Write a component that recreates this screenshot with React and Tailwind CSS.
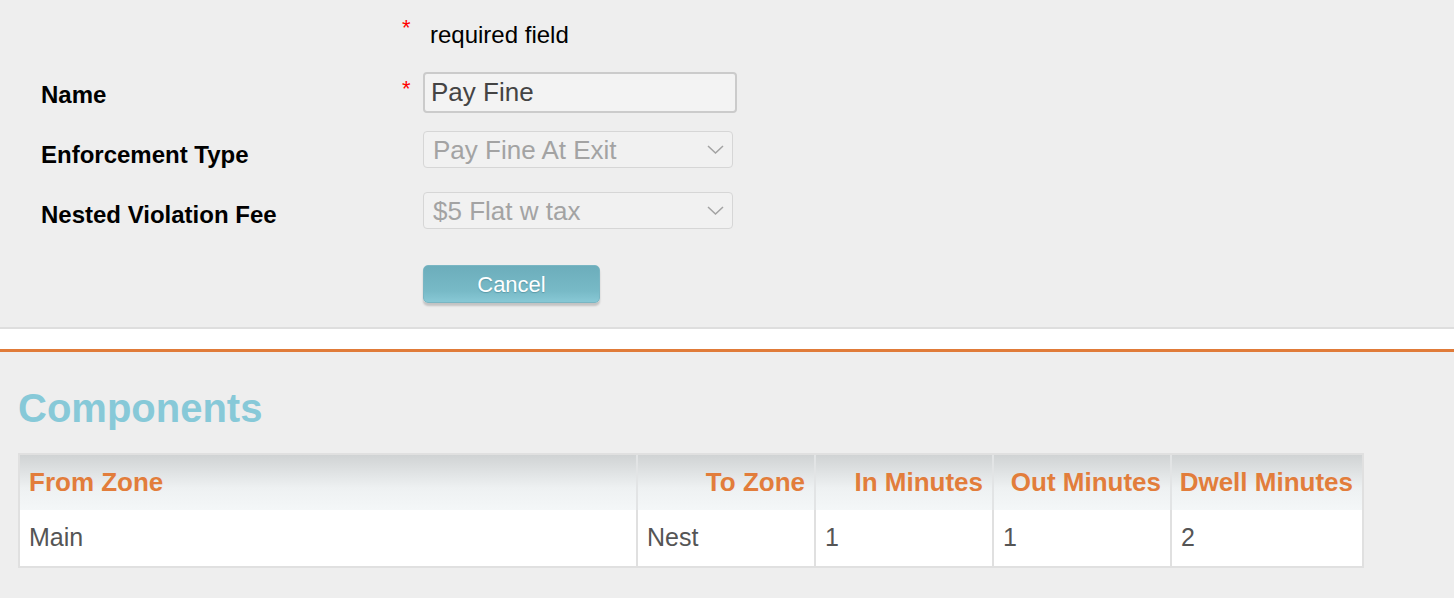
import React from "react";

const Chevron = () => (
  <svg width="17" height="9" viewBox="0 0 17 9" fill="none">
    <path d="M1 1l7.5 7 7.5-7" stroke="#a3a3a3" strokeWidth="1.5" />
  </svg>
);

const Asterisk = ({ className = "" }) => (
  <div className={"w-[21px] shrink-0 self-start text-[22px] leading-none text-[#ff0000] " + className}>
    *
  </div>
);

const FakeSelect = ({ value }) => (
  <div className="flex items-center justify-between w-[310px] h-[37px] self-start mt-[6px] border border-[#d6d6d6] rounded-[4px] bg-[#f1f1f1] pl-[9px] pr-[8px]">
    <span className="text-[26px] leading-none text-[#a3a3a3]">{value}</span>
    <Chevron />
  </div>
);

const rows = [
  { from: "Main", to: "Nest", inMin: "1", outMin: "1", dwell: "2" },
];

const App = () => {
  return (
    <div className="min-h-[598px] bg-[#eeeeee] font-['Liberation_Sans',Arial,sans-serif]">
      {/* form */}
      <div className="pt-[5px] pb-[24px]">
        <div className="flex h-[60px]">
          <div className="w-[402px] shrink-0" />
          <Asterisk className="mt-[12px]" />
          <div className="self-center pl-[7px] text-[24px] text-black">required field</div>
        </div>

        <div className="flex h-[60px]">
          <div className="w-[402px] shrink-0 pl-[41px] self-center text-[24px] font-bold text-black">Name</div>
          <Asterisk className="mt-[13px]" />
          <div className="self-start mt-[7px] w-[314px] h-[41px] flex items-center border-2 border-[#cbcbcb] rounded-[4px] bg-[#f3f3f3] pl-[6px] text-[26px] text-[#444444]">
            Pay Fine
          </div>
        </div>

        <div className="flex h-[60px]">
          <div className="w-[402px] shrink-0 pl-[41px] self-center text-[24px] font-bold text-black">Enforcement Type</div>
          <div className="w-[21px] shrink-0" />
          <FakeSelect value="Pay Fine At Exit" />
        </div>

        <div className="flex h-[60px]">
          <div className="w-[402px] shrink-0 pl-[41px] self-center text-[24px] font-bold text-black">Nested Violation Fee</div>
          <div className="w-[21px] shrink-0" />
          <div className="flex mt-[1px]">
            <FakeSelect value="$5 Flat w tax" />
          </div>
        </div>

        <div className="flex mt-[20px] pl-[423px]">
          <button
            type="button"
            className="w-[177px] h-[38px] rounded-[5px] border border-[#7ab6c3] bg-linear-to-b from-[#6cadbb] via-[#78bac7] via-70% to-[#88c8d5] text-[22px] text-white shadow-[0_3px_2px_rgba(0,0,0,0.18)] [text-shadow:0_1px_1px_rgba(60,120,135,0.5)]"
          >
            Cancel
          </button>
        </div>
      </div>

      {/* divider */}
      <div className="border-t-2 border-[#dedede] bg-white h-[22px]" />
      <div className="h-[3px] bg-[#e07b39]" />

      {/* components */}
      <h2 className="mt-[32px] pl-[18px] text-[40px] leading-[48px] font-bold text-[#87c9d8]">Components</h2>

      <div className="mt-[21px] ml-[18px] w-[1346px] border-2 border-[#e0e0e0]">
        <div className="grid grid-cols-[616px_178px_178px_178px_1fr] h-[55px] bg-linear-to-b from-[#d0d3d4] via-[#eef1f2] via-60% to-[#f4f7f8] text-[26px] font-bold text-[#e27d3b]">
          <div className="flex items-center pl-[9px]">From Zone</div>
          <div className="flex items-center justify-end pr-[9px] border-l-2 border-[#e2e4e5]">To Zone</div>
          <div className="flex items-center justify-end pr-[9px] border-l-2 border-[#e2e4e5]">In Minutes</div>
          <div className="flex items-center justify-end pr-[9px] border-l-2 border-[#e2e4e5]">Out Minutes</div>
          <div className="flex items-center justify-end pr-[9px] border-l-2 border-[#e2e4e5]">Dwell Minutes</div>
        </div>
        {rows.map((r, i) => (
          <div key={i} className="grid grid-cols-[616px_178px_178px_178px_1fr] h-[56px] bg-white text-[25px] text-[#555555]">
            <div className="flex items-center pl-[9px]">{r.from}</div>
            <div className="flex items-center pl-[9px] border-l-2 border-[#e0e0e0]">{r.to}</div>
            <div className="flex items-center pl-[9px] border-l-2 border-[#e0e0e0]">{r.inMin}</div>
            <div className="flex items-center pl-[9px] border-l-2 border-[#e0e0e0]">{r.outMin}</div>
            <div className="flex items-center pl-[9px] border-l-2 border-[#e0e0e0]">{r.dwell}</div>
          </div>
        ))}
      </div>
    </div>
  );
};

export default App;
